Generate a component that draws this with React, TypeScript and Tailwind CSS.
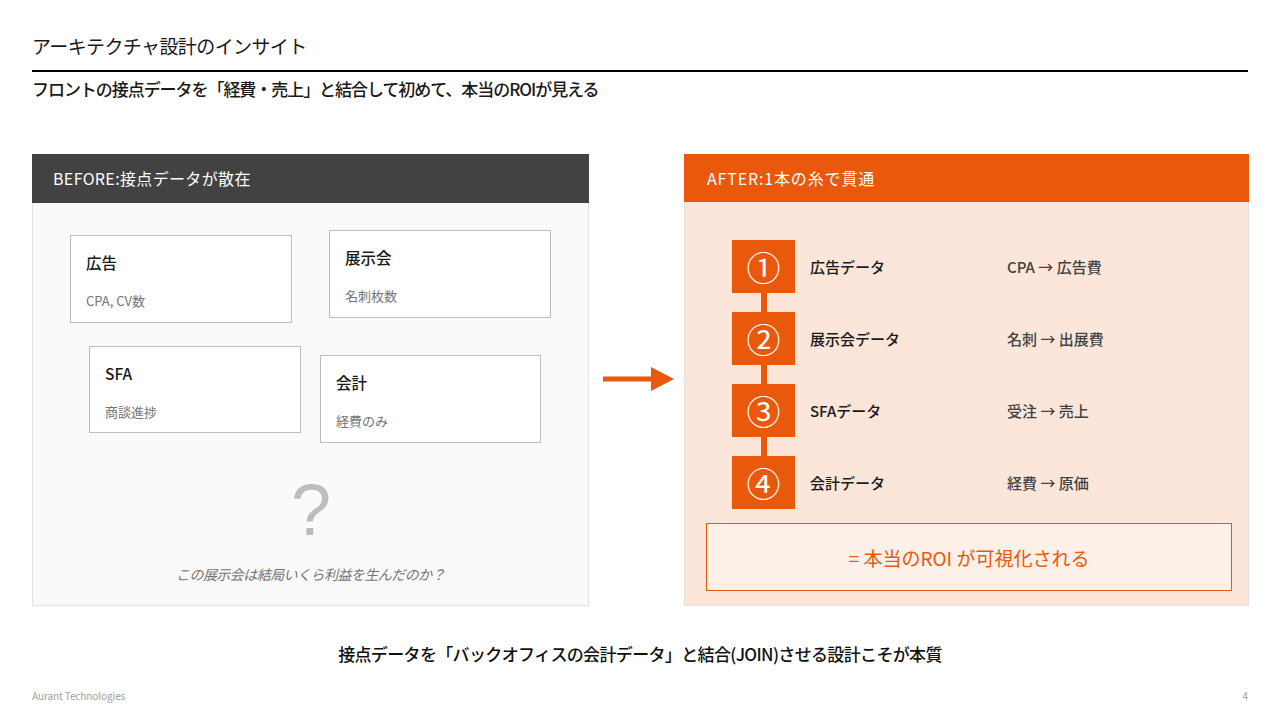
const font = { fontFamily: '"Noto Sans CJK JP", "Noto Sans", sans-serif' };

const scattered = [
  { title: "広告", sub: "CPA, CV数", cls: "left-[37px] top-[32px] w-[222px] h-[88px]" },
  { title: "展示会", sub: "名刺枚数", cls: "left-[296px] top-[27px] w-[222px] h-[88px]" },
  { title: "SFA", sub: "商談進捗", cls: "left-[56px] top-[143px] w-[212px] h-[87px]" },
  { title: "会計", sub: "経費のみ", cls: "left-[287px] top-[152px] w-[221px] h-[88px]" },
];

const steps = [
  { num: "①", name: "広告データ", map: "CPA → 広告費" },
  { num: "②", name: "展示会データ", map: "名刺 → 出展費" },
  { num: "③", name: "SFAデータ", map: "受注 → 売上" },
  { num: "④", name: "会計データ", map: "経費 → 原価" },
];

export default function App() {
  return (
    <div style={font} className="w-[1280px] h-[720px] bg-white overflow-hidden flex flex-col px-8 text-[#1a1a1a]">
      <div className="h-[70px] flex items-end pb-[10px] text-[19px] leading-[28px] tracking-[-0.6px]">アーキテクチャ設計のインサイト</div>
      <div className="h-[2px] bg-black" />
      <div className="h-[82px] pt-[4px] text-[17px] leading-[26px] font-medium tracking-[-1.05px]">
        フロントの接点データを「経費・売上」と結合して初めて、本当のROIが見える
      </div>

      <div className="flex items-stretch h-[452px]">
        {/* before */}
        <div className="w-[557px] shrink-0 flex flex-col">
          <div className="h-[49px] bg-[#424242] text-white text-[16px] tracking-[0.35px] flex items-center pl-[21px] pb-[1px]">
            BEFORE:接点データが散在
          </div>
          <div className="relative flex-1 bg-[#fafafa] border border-t-0 border-[#e2e2e2] flex flex-col items-center">
            {scattered.map((c) => (
              <div key={c.title} className={`absolute bg-white border border-[#bdbdbd] pl-[15px] ${c.cls}`}>
                <div className="mt-[14px] text-[15.5px] leading-[24px] font-medium">{c.title}</div>
                <div className="mt-[18px] text-[13px] leading-[18px] text-[#757575]">{c.sub}</div>
              </div>
            ))}
            <div className="mt-[269px] ml-[1px] text-[72px] leading-[76px] text-[#bdbdbd]" style={{ fontFamily: '"Liberation Sans", sans-serif' }}>?</div>
            <div className="mt-[16px] text-[14px] leading-[20px] italic text-[#757575] tracking-[-0.55px]">この展示会は結局いくら利益を生んだのか？</div>
          </div>
        </div>

        {/* arrow */}
        <div className="w-[95px] shrink-0 flex items-center pl-[14px]">
          <svg width="71" height="24" viewBox="0 0 71 24" className="mt-[-2px]">
            <rect x="0" y="9.5" width="49" height="5" fill="#ea580c" />
            <polygon points="48,0 71,12 48,24" fill="#ea580c" />
          </svg>
        </div>

        {/* after */}
        <div className="w-[565px] shrink-0 flex flex-col">
          <div className="h-[48px] bg-[#ea580c] text-white text-[16px] tracking-[0.85px] flex items-center pl-[23px]">
            AFTER:1本の糸で貫通
          </div>
          <div className="flex-1 bg-[#fbe6d9] border border-t-0 border-[#e6e0dc] pt-[38px] px-[21px] flex flex-col">
            <div className="flex flex-col">
              {steps.map((s, i) => (
                <div key={s.num} className="flex flex-col">
                  <div className="flex items-center h-[53px] pl-[26px]">
                    <div className="w-[63px] h-[53px] bg-[#ea580c] text-white text-[34px] flex items-center justify-center">{s.num}</div>
                    <div className="w-[212px] pl-[15px] pt-[2px] text-[15px] font-medium">{s.name}</div>
                    <div className="pt-[2px] text-[15px] font-medium text-[#424242]">{s.map}</div>
                  </div>
                  {i < 3 && <div className="w-[6px] h-[19px] bg-[#ea580c] ml-[55px]" />}
                </div>
              ))}
            </div>
            <div className="mt-[14px] pt-[2px] h-[68px] w-[526px] bg-[#fdf0e9] border border-[#ea580c] text-[#ea580c] text-[19px] flex items-center justify-center">
              = 本当のROI が可視化される
            </div>
          </div>
        </div>
      </div>

      <div className="mt-[35px] text-center text-[17px] leading-[26px] font-medium tracking-[-0.65px] text-[#111]">
        接点データを「バックオフィスの会計データ」と結合(JOIN)させる設計こそが本質
      </div>
      <div className="mt-[22px] flex justify-between text-[10px] leading-[14px] tracking-[-0.1px] text-[#9e9e9e]">
        <span>Aurant Technologies</span>
        <span>4</span>
      </div>
    </div>
  );
}
